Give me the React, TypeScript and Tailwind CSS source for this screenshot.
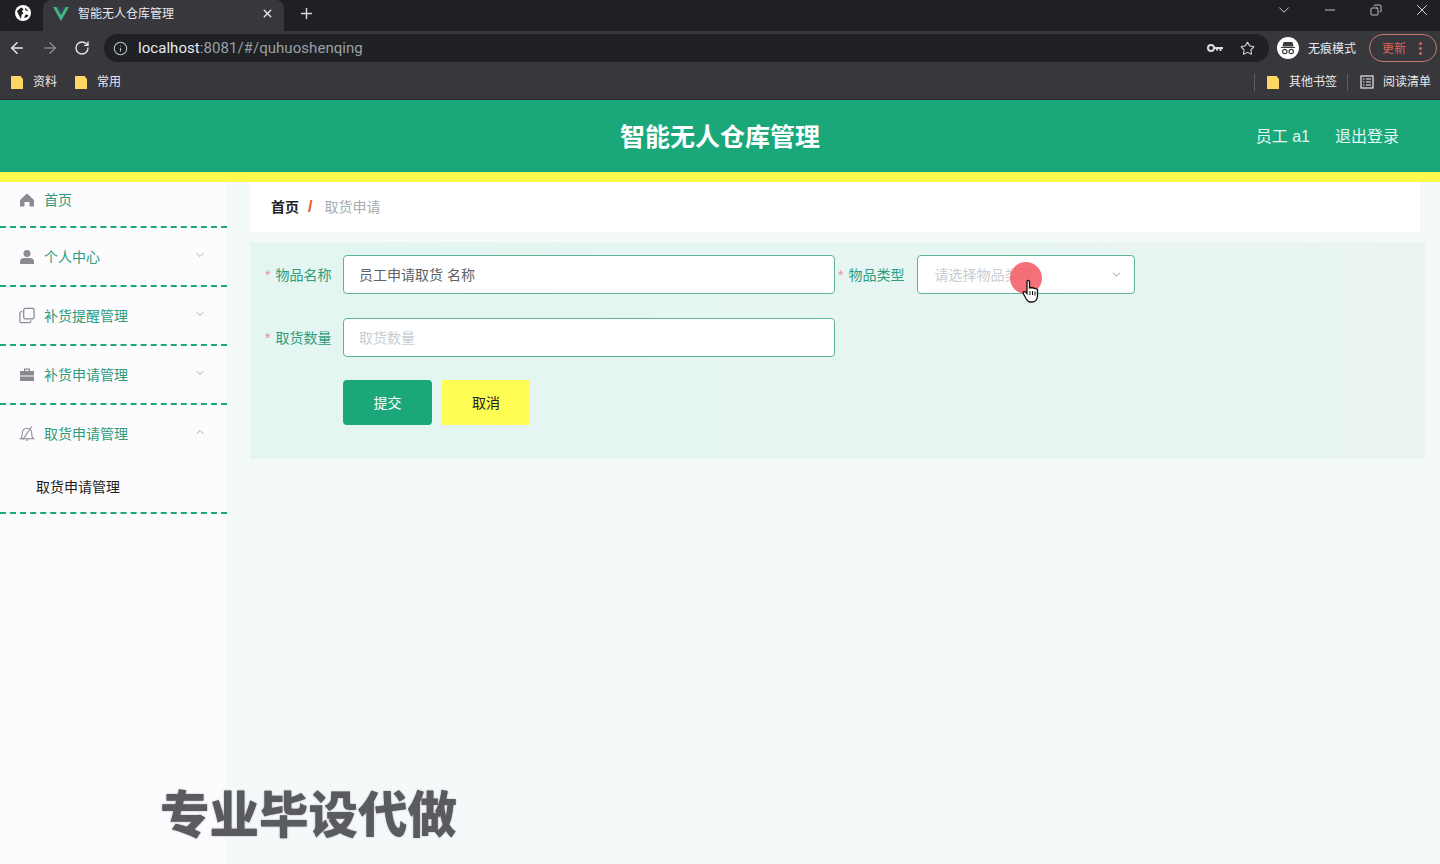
import { ArrowLeft, ArrowRight, ChevronDown, ChevronUp, Copy, Info, Minus, Plus, RotateCw, Star, X } from "lucide-react"
import type { ReactNode } from "react"

const cjk = "font-['Liberation_Sans','Noto_Sans_CJK_SC',sans-serif]"

function Folder() {
  return (
    <svg width="12" height="15" viewBox="0 0 12 15" className="shrink-0">
      <path d="M0 1h9.500L12 4v10H0z" fill="#fdd663" />
    </svg>
  )
}

function HomeIcon() {
  return (
    <svg width="16" height="16" viewBox="0 0 16 16">
      <path d="M8 1.500 15 8v6.500h-4.500V10h-5v4.500H1V8z" fill="#8a8a90" />
    </svg>
  )
}

function UserIcon() {
  return (
    <svg width="16" height="16" viewBox="0 0 16 16">
      <circle cx="8" cy="4.500" r="3.500" fill="#8a8a90" />
      <path d="M1 15v-2.500C1 10 3 9 5 9h6c2 0 4 1 4 3.500V15z" fill="#8a8a90" />
    </svg>
  )
}

function CopyIcon() {
  return (
    <svg width="17" height="17" viewBox="0 0 17 17" fill="none" stroke="#8a8a90" strokeWidth="1.300">
      <rect x="5" y="1" width="11" height="11" rx="1.500" />
      <path d="M3.500 4.500H2.500A1.500 1.500 0 0 0 1 6v9a1 1 0 0 0 1 1h9a1.500 1.500 0 0 0 1.500-1.500v-1" />
    </svg>
  )
}

function CaseIcon() {
  return (
    <svg width="16" height="16" viewBox="0 0 16 16">
      <path d="M5 4V1.500h6V4h-1.300V2.800H6.300V4z" fill="#8a8a90" />
      <rect x="1" y="4" width="14" height="4.500" fill="#8a8a90" />
      <rect x="1" y="9.500" width="14" height="4.500" fill="#8a8a90" />
    </svg>
  )
}

function BellSlash() {
  return (
    <svg width="17" height="17" viewBox="0 0 17 17" fill="none" stroke="#8a8a90" strokeWidth="1.100">
      <path d="M1.500 14h14c-1.500-1-2-2.500-2-5.500C13.500 5 11.500 3 8.500 3s-5 2-5 5.500c0 3-.5 4.500-2 5.500z" />
      <path d="M7 15.500h3M4 15 13.500 1" />
    </svg>
  )
}

function Incognito() {
  return (
    <div className="flex h-[22px] w-[22px] items-center justify-center rounded-full bg-white">
      <svg width="16" height="14" viewBox="0 0 16 14">
        <path d="M1 6h14v1H1zM3.500 1h9l1 4.500h-11z" fill="#3a3a3e" />
        <circle cx="4.800" cy="10.500" r="2.200" fill="none" stroke="#3a3a3e" strokeWidth="1.200" />
        <circle cx="11.200" cy="10.500" r="2.200" fill="none" stroke="#3a3a3e" strokeWidth="1.200" />
      </svg>
    </div>
  )
}

function ReadingList() {
  return (
    <svg width="14" height="14" viewBox="0 0 14 14" fill="none" stroke="#e8eaed" strokeWidth="1.200">
      <rect x="1" y="1" width="12" height="12" />
      <path d="M3 4h1.500M6 4h5M3 7h1.500M6 7h5M3 10h1.500M6 10h5" />
    </svg>
  )
}

function TabBar() {
  return (
    <div className="flex h-[31px] items-end bg-[#1f1f24]">
      <div className="flex h-[26px] w-[43px] items-center self-start pl-[15px]">
        <div className="flex h-[16px] w-[16px] items-center justify-center rounded-full bg-white">
          <svg width="14" height="14" viewBox="0 0 14 14">
            <path d="M1 5 5 1.500 7.500 3 6 5.500 7.500 7 5.500 9 5 13 3 9.500z M8 12l1.500-3.500 3 .5-1 2z M9 1.500l3.500 3.500-3-.5z" fill="#1f1f24" />
          </svg>
        </div>
      </div>
      <div className="flex h-[31px] w-[241px] items-center rounded-t-lg bg-[#37373c] pb-[4px] pl-[10px] pr-[10px]">
        <svg width="16" height="14" viewBox="0 0 16 14" className="mr-[9px] shrink-0">
          <path d="M0 0h3.500L8 8l4.500-8H16L8 14z" fill="#41b883" />
          <path d="M3.500 0h2.700L8 3.200 9.800 0h2.700L8 8z" fill="#35495e" />
        </svg>
        <span className="flex-1 text-xs text-[#e8eaed]">智能无人仓库管理</span>
        <X size={13} strokeWidth={2.500} className="text-[#e8eaed]" />
      </div>
      <div className="flex h-[26px] w-[44px] items-center justify-center self-start">
        <Plus size={17} strokeWidth={2} className="text-[#dadce0]" />
      </div>
      <div className="flex-1" />
      <div className="flex items-center gap-[22px] self-start pr-[6px] text-[#dcdde0]">
        <div className="flex h-[20px] w-[24px] items-center justify-center"><ChevronDown size={18} strokeWidth={1.200} /></div>
        <div className="flex h-[20px] w-[24px] items-center justify-center"><Minus size={16} strokeWidth={1.300} /></div>
        <div className="flex h-[20px] w-[24px] items-center justify-center"><Copy size={12} strokeWidth={1.700} className="-scale-x-100" /></div>
        <div className="flex h-[20px] w-[24px] items-center justify-center"><X size={18} strokeWidth={1.300} /></div>
      </div>
    </div>
  )
}

function AddressBar() {
  return (
    <div className="flex h-[34px] items-center bg-[#37373c] pl-[8px] pr-[3px]">
      <ArrowLeft size={18} strokeWidth={2} className="mr-[15px] text-[#e8eaed]" />
      <ArrowRight size={18} strokeWidth={2} className="mr-[15px] text-[#85878b]" />
      <RotateCw size={16} strokeWidth={2} className="mr-[14px] text-[#e8eaed]" />
      <div className="flex h-[28px] flex-1 items-center rounded-full bg-[#202125] pl-[9px] pr-[14px]">
        <Info size={15} strokeWidth={1.700} className="mr-[10px] text-[#bdc1c6]" />
        <span className="flex-1 font-['Roboto',sans-serif] text-[15px] tracking-[0.05px] text-[#9aa0a6]">
          <span className="text-[#e8eaed]">localhost</span>:8081/#/quhuoshenqing
        </span>
        <svg width="16" height="10" viewBox="0 0 16 10" className="mr-[17px]">
          <circle cx="4" cy="5" r="3" fill="none" stroke="#dadce0" strokeWidth="2" />
          <path d="M7 4h9v2h-1.500v2h-2V6H11v1.500H9V6H7z" fill="#dadce0" />
        </svg>
        <Star size={15} strokeWidth={1.700} className="text-[#dadce0]" />
      </div>
      <div className="ml-[7px] flex h-[28px] w-[89px] items-center gap-[9px] pl-[1px]">
        <Incognito />
        <span className="mt-[2px] text-xs text-[#e8eaed]">无痕模式</span>
      </div>
      <div className="ml-[4px] flex h-[28px] w-[68px] items-center rounded-full border border-[#c97a72] pl-[12px]">
        <span className="mt-[2px] text-xs text-[#d9645b]">更新</span>
        <div className="ml-[13px] flex flex-col gap-[2px]">
          <span className="h-[3px] w-[3px] rounded-full bg-[#d9645b]" />
          <span className="h-[3px] w-[3px] rounded-full bg-[#d9645b]" />
          <span className="h-[3px] w-[3px] rounded-full bg-[#d9645b]" />
        </div>
      </div>
    </div>
  )
}

function BookmarkBar() {
  return (
    <div className="flex h-[35px] items-center border-b border-[#2b2b30] bg-[#37373c] pl-[11px] text-xs text-[#e8eaed]">
      <Folder />
      <span className="ml-[10px]">资料</span>
      <div className="ml-[18px]"><Folder /></div>
      <span className="ml-[10px]">常用</span>
      <div className="flex-1" />
      <div className="mr-[12px] h-[17px] w-px bg-[#5f6064]" />
      <Folder />
      <span className="ml-[10px]">其他书签</span>
      <div className="ml-[10px] mr-[12px] h-[17px] w-px bg-[#5f6064]" />
      <ReadingList />
      <span className="ml-[9px] mr-[9px]">阅读清单</span>
    </div>
  )
}

function MenuRow({ icon, label, arrow, h }: { icon: ReactNode; label: string; arrow?: "down" | "up"; h: string }) {
  return (
    <div className={`flex items-center pl-[19px] pr-[21px] text-sm text-[#2e9c7c] ${h}`}>
      <span className="mr-[9px] flex w-[16px] justify-center">{icon}</span>
      <span className="flex-1">{label}</span>
      {arrow === "down" && <ChevronDown size={12} className="-mt-[4px] text-[#a9adb3]" />}
      {arrow === "up" && <ChevronUp size={12} className="-mt-[4px] text-[#a9adb3]" />}
    </div>
  )
}

function Dash() {
  return <div className="border-b-2 border-dashed border-[#1aa87b]" />
}

function Sidebar() {
  return (
    <aside className="w-[227px] shrink-0 bg-[#fcfbfd]">
      <MenuRow icon={<HomeIcon />} label="首页" h="h-[44px] pb-[8px]" />
      <Dash />
      <MenuRow icon={<UserIcon />} label="个人中心" arrow="down" h="h-[57px]" />
      <Dash />
      <MenuRow icon={<CopyIcon />} label="补货提醒管理" arrow="down" h="h-[57px]" />
      <Dash />
      <MenuRow icon={<CaseIcon />} label="补货申请管理" arrow="down" h="h-[57px]" />
      <Dash />
      <MenuRow icon={<BellSlash />} label="取货申请管理" arrow="up" h="h-[57px]" />
      <div className="flex h-[50px] items-center pl-[36px] text-sm text-[#1c1c1c]">取货申请管理</div>
      <Dash />
    </aside>
  )
}

function Label({ text }: { text: string }) {
  return (
    <span className="w-[66px] shrink-0 whitespace-nowrap text-right text-sm text-[#2e9c7c]">
      <span className="mr-[5px] text-[#ec8fa0]">*</span>
      {text}
    </span>
  )
}

function Form() {
  return (
    <div className="mr-[15px] mt-[10px] flex h-[217px] flex-col bg-gradient-to-r from-[#e3f6f1] to-[#eaf5f3] pl-[15px] pt-[13px]">
      <div className="flex items-center">
        <Label text="物品名称" />
        <div className="ml-[12px] flex h-[39px] w-[492px] items-center rounded border border-[#5fb39b] bg-white pl-[15px] text-sm text-[#606266]">
          员工申请取货 名称
        </div>
        <div className="ml-[3px]"><Label text="物品类型" /></div>
        <div className="ml-[13px] flex h-[39px] w-[218px] items-center rounded border border-[#5fb39b] bg-white pl-[16px] pr-[11px] text-sm text-[#c8ccd2]">
          <span className="flex-1">请选择物品类型</span>
          <ChevronDown size={13} className="text-[#b9bdc4]" />
        </div>
      </div>
      <div className="mt-[24px] flex items-center">
        <Label text="取货数量" />
        <div className="ml-[12px] flex h-[39px] w-[492px] items-center rounded border border-[#5fb39b] bg-white pl-[15px] text-sm text-[#c8ccd2]">
          取货数量
        </div>
      </div>
      <div className="ml-[78px] mt-[23px] flex gap-[10px]">
        <button className="flex h-[45px] w-[89px] items-center justify-center rounded bg-[#1aa87b] text-sm text-white">提交</button>
        <button className="flex h-[45px] w-[88px] items-center justify-center bg-[#fdfd53] text-sm text-[#222]">取消</button>
      </div>
    </div>
  )
}

export default function App() {
  return (
    <div className={`relative flex h-[864px] w-[1440px] flex-col overflow-hidden bg-[#f4f9fa] ${cjk}`}>
      <TabBar />
      <AddressBar />
      <BookmarkBar />
      <header className="flex h-[72px] shrink-0 items-center justify-end bg-[#1aa87b] pr-[41px] pt-[2px] text-base text-[#e3f6ef]">
        <span>员工 a1</span>
        <span className="ml-[25px]">退出登录</span>
      </header>
      <div className="h-[10px] shrink-0 bg-[#fefa4c]" />
      <div className="flex flex-1">
        <Sidebar />
        <main className="flex-1 pl-[23px]">
          <div className="mr-[20px] flex h-[50px] items-center bg-white pl-[21px] text-sm">
            <span className="font-semibold text-[#222]">首页</span>
            <span className="ml-[9px] mr-[12px] text-base font-semibold text-[#e2582b]">/</span>
            <span className="text-[#a8abb2]">取货申请</span>
          </div>
          <Form />
        </main>
      </div>

      {/* centred title sits over the header */}
      <div className="absolute left-0 right-0 top-[119px] text-center text-[25px] font-bold text-white">智能无人仓库管理</div>

      {/* screen recorder's click highlight and cursor */}
      <div className="absolute left-[1010px] top-[262px] h-[32px] w-[32px] rounded-full bg-[#f4606a]/90" />
      <svg width="18" height="24" viewBox="0 0 18 24" className="absolute left-[1022px] top-[279px]">
        <path d="M5 2c1-1 2.500-1 2.500 1v6l2-.5 2 .5 2 .5 2 1V17c0 3-2 6-5 6H8c-2 0-3-2-4-3.500L1.500 15c-1-2 1-3 2-2L5 14.500z" fill="#fff" stroke="#111" strokeWidth="1.300" />
        <path d="M8 12v4M10.500 12v4M13 12.500v4" stroke="#111" strokeWidth="1" />
      </svg>

      {/* watermark from the video */}
      <div className="absolute left-[160px] top-[779px] text-[49.500px] font-black text-[#5a5b60] [-webkit-text-stroke:2px_#ffffff] [paint-order:stroke_fill] [text-shadow:0_0_2px_#9a9a9a]">
        专业毕设代做
      </div>
    </div>
  )
}
